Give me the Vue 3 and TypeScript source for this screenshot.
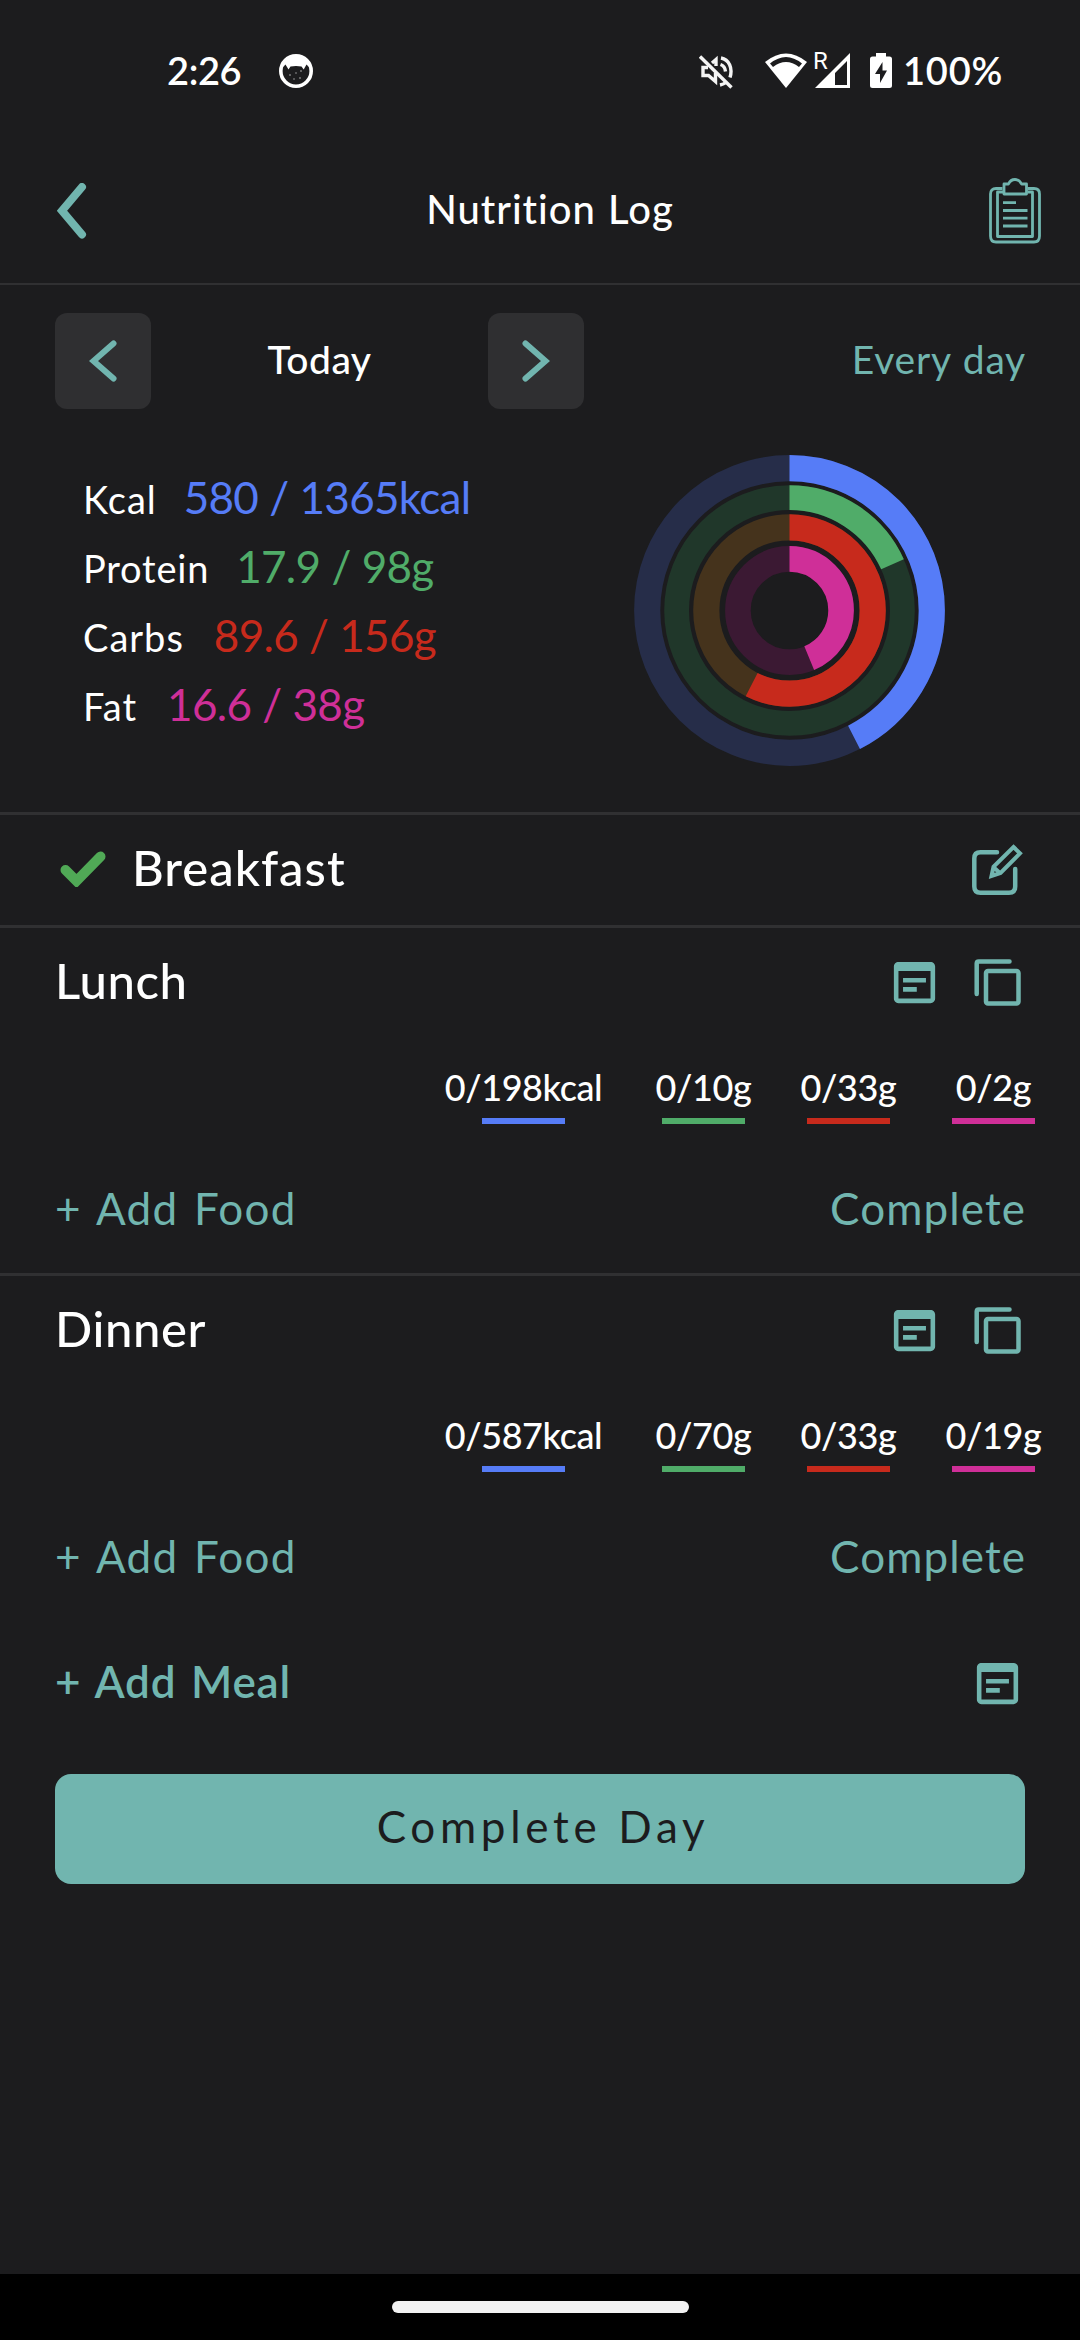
<script setup lang="ts">
interface Macro { label: string; value: string; color: string }
interface Ring { r: number; w: number; frac: number; color: string; track: string }
interface Meal { name: string; done: boolean; totals: { text: string; color: string }[] }

const blue = '#567cf7'
const green = '#50ac69'
const red = '#c72a1c'
const pink = '#cf2f98'

const macros: Macro[] = [
  { label: 'Kcal', value: '580 / 1365kcal', color: blue },
  { label: 'Protein', value: '17.9 / 98g', color: green },
  { label: 'Carbs', value: '89.6 / 156g', color: red },
  { label: 'Fat', value: '16.6 / 38g', color: pink },
]

const rings: Ring[] = [
  { r: 142.3, w: 26.2, frac: 580 / 1365, color: blue, track: '#262d49' },
  { r: 112.9, w: 24.8, frac: 17.9 / 98, color: green, track: '#20372a' },
  { r: 83.2, w: 26.2, frac: 89.6 / 156, color: red, track: '#45331c' },
  { r: 51.6, w: 25.6, frac: 16.6 / 38, color: pink, track: '#3b1933' },
]

const dash = (ring: Ring): string => {
  const c = 2 * Math.PI * ring.r
  return `${c * ring.frac} ${c}`
}

const totals = (a: string, b: string, c: string, d: string) => [
  { text: a, color: blue },
  { text: b, color: green },
  { text: c, color: red },
  { text: d, color: pink },
]

const meals: Meal[] = [
  { name: 'Breakfast', done: true, totals: [] },
  { name: 'Lunch', done: false, totals: totals('0/198kcal', '0/10g', '0/33g', '0/2g') },
  { name: 'Dinner', done: false, totals: totals('0/587kcal', '0/70g', '0/33g', '0/19g') },
]
</script>

<template>
  <div class="screen">
    <div class="status">
      <span class="clock">2:26</span>
      <svg class="cat" viewBox="0 0 34 34">
        <circle cx="17" cy="17" r="15.2" fill="none" stroke="#fff" stroke-width="3.6" />
        <path d="M3 14Q5 2 17 2T31 14L27.500 10.500L24.700 15.500L22.500 12.500Q17 11.500 11.500 12.500L9.500 15.500L6.500 10.500Z" fill="#fff" />
        <g fill="#bbb"><circle cx="11" cy="21" r=".8" /><circle cx="17" cy="19" r=".7" /><circle cx="22" cy="17" r=".8" /><circle cx="15" cy="25" r=".7" /><circle cx="21" cy="24" r=".8" /></g>
      </svg>
      <svg class="mute" viewBox="0 0 34 34" fill="none" stroke="#f4f4f4" stroke-width="3.400">
        <path d="M9 12.500H4V20.500H9.500L16.500 26.500V18M13 8L17 4.500V11" />
        <path d="M22 3C30 4.500 34 13 31 22.500M21.500 9.500Q26 11 26.500 16.500M21 30Q25 29 27 27.500" />
        <path d="M1 1.500L32.500 32.500" />
      </svg>
      <svg class="wifi" viewBox="0 0 42 35">
        <path d="M0 9Q21-8 42 9L21 35Z" fill="#fff" />
        <path d="M5 10.500Q21-2.500 37 10.500L34 14Q21 4 8 14Z" fill="#1c1c1e" />
      </svg>
      <div class="cell">
        <svg viewBox="0 0 35 35"><path d="M35 0V35H0ZM32 8L20 20V32H32Z" fill="#fff" fill-rule="evenodd" /></svg>
        <span class="roam">R</span>
      </div>
      <svg class="battery" viewBox="0 0 22 35">
        <path d="M6 0H16V3.500H19.500Q22 3.500 22 6V32.500Q22 35 19.500 35H2.500Q0 35 0 32.500V6Q0 3.500 2.500 3.500H6Z" fill="#fff" />
        <path d="M12.500 9L5 21H10V30L17 17.500H12.500Z" fill="#1c1c1e" />
      </svg>
      <span class="pct">100%</span>
    </div>

    <header class="header">
      <svg class="back" viewBox="0 0 30 56"><path d="M25 4L5 27.800L25 51.500" /></svg>
      <h1>Nutrition Log</h1>
      <svg class="clipboard" viewBox="0 0 52 66">
        <path d="M13.500 10.500H7Q1.500 10.500 1.500 16V58Q1.500 64 7 64H45Q50.500 64 50.500 58V16Q50.500 10.500 45 10.500H38.500" />
        <path d="M14 14H8.500V58.500H43.500V14H38.500" />
        <path d="M15 6H19.500Q21.500 1.500 26 1.500T32.500 6H37.500V16H15Z" />
        <path d="M14 24.700H27M14 32.500H38.500M14 40.200H38.500M14 48H38.500" />
      </svg>
    </header>

    <div class="day">
      <button class="step"><svg viewBox="0 0 28 42"><path d="M24.500 3.500L4.500 21L24.500 38.500" /></svg></button>
      <span class="today">Today</span>
      <button class="step"><svg viewBox="0 0 28 42"><path d="M3.500 3.500L23.500 21L3.500 38.500" /></svg></button>
      <span class="every">Every day</span>
    </div>

    <section class="summary">
      <div class="macros">
        <div v-for="m in macros" :key="m.label" :class="['macro', m.label.toLowerCase()]">
          <span class="label">{{ m.label }}</span><span class="value" :style="{ color: m.color }">{{ m.value }}</span>
        </div>
      </div>
      <svg class="rings" viewBox="-155.500 -155.500 311 311">
        <g v-for="ring in rings" :key="ring.r" fill="none" :stroke-width="ring.w" transform="rotate(-90)">
          <circle :r="ring.r" :stroke="ring.track" />
          <circle :r="ring.r" :stroke="ring.color" :stroke-dasharray="dash(ring)" />
        </g>
      </svg>
    </section>

    <section v-for="meal in meals" :key="meal.name" class="meal">
      <div class="mealhead">
        <svg v-if="meal.done" class="check" viewBox="0 0 46 36"><path d="M5.500 19L16.500 30L40.500 5.500" /></svg>
        <h2 :class="{ done: meal.done }">{{ meal.name }}</h2>
        <svg v-if="meal.done" class="icon line" viewBox="0 0 55 55">
          <path d="M27 10.300H10.500Q4.300 10.300 4.300 16.500V44.500Q4.300 50.700 10.500 50.700H39Q45.200 50.700 45.200 44.500V27" stroke-linecap="round" />
          <path d="M43.500 5L50 11.300L30.500 31L21.500 34L23.500 24.800ZM23.800 25.500L30.500 31.500" stroke-width="4" />
        </svg>
        <template v-else>
          <svg class="icon fill" viewBox="0 0 24 24"><path d="M19 3H5c-1.110 0-2 .9-2 2v14c0 1.100.89 2 2 2h14c1.100 0 2-.9 2-2V5c0-1.100-.89-2-2-2zm0 16H5V7h14v12zm-2-7H7v-2h10v2zm-4 4H7v-2h6v2z" /></svg>
          <svg class="icon line" viewBox="0 0 55 55">
            <path d="M6.700 39V8.500Q6.700 6.500 8.700 6.500H39.500" stroke-linecap="round" />
            <rect x="16" y="16" width="32.500" height="32.500" rx="2" />
          </svg>
        </template>
      </div>
      <template v-if="!meal.done">
        <div class="totals">
          <div v-for="t in meal.totals" :key="t.color" class="total">
            <span>{{ t.text }}</span>
            <i :style="{ background: t.color }"></i>
          </div>
        </div>
        <div class="actions"><span>+ Add Food</span><span class="complete">Complete</span></div>
      </template>
    </section>

    <div class="addmeal">
      <span>+ Add Meal</span>
      <svg class="icon fill" viewBox="0 0 24 24"><path d="M19 3H5c-1.110 0-2 .9-2 2v14c0 1.100.89 2 2 2h14c1.100 0 2-.9 2-2V5c0-1.100-.89-2-2-2zm0 16H5V7h14v12zm-2-7H7v-2h10v2zm-4 4H7v-2h6v2z" /></svg>
    </div>
    <button class="finish">Complete Day</button>

    <div class="navbar"><div class="pill"></div></div>
  </div>
</template>

<style>
body { background: #1c1c1e; }
</style>

<style scoped>
.screen {
  width: 1080px;
  height: 2340px;
  display: flex;
  flex-direction: column;
  background: #1c1c1e;
  color: #fff;
  font-family: Lato, "Liberation Sans", sans-serif;
  overflow: hidden;
}
.screen > * { flex-shrink: 0; }
svg { display: block; flex-shrink: 0; }
h1, h2 { margin: 0; font-weight: 400; }
button { border: 0; padding: 0; font: inherit; }

.status {
  height: 132px;
  box-sizing: border-box;
  padding: 53px 0 0 167px;
  display: flex;
  align-items: flex-start;
  white-space: nowrap;
}
.clock, .pct {
  font-size: 38px;
  line-height: 35px;
  font-weight: 600;
}
.clock { width: 112px; letter-spacing: -0.4px; }
.cat { width: 34px; height: 34px; margin-top: 1px; }
.mute { width: 34px; height: 34px; margin: 2px 0 0 386px; }
.wifi { width: 42px; height: 35px; margin-left: 32px; }
.cell { position: relative; width: 35px; height: 35px; margin-left: 8px; }
.roam {
  position: absolute;
  left: -2px;
  top: -2px;
  font: 24px/20px Roboto, sans-serif;
}
.battery { width: 22px; height: 35px; margin-left: 20px; }
.pct { margin-left: 11px; letter-spacing: 0.8px; }

.header {
  height: 151px;
  display: flex;
  align-items: center;
  justify-content: space-between;
  padding: 0 39px 0 57px;
  border-bottom: 2px solid #303032;
}
.header h1 {
  font-size: 40px;
  line-height: 50px;
  font-weight: 500;
  letter-spacing: 1px;
  word-spacing: 1px;
  padding: 2px 0 0 24px;
}
.back { width: 30px; height: 56px; margin-top: 6px; }
.back path, .step path {
  fill: none;
  stroke: #71b5af;
  stroke-width: 8;
  stroke-linecap: round;
}
.clipboard { width: 52px; height: 66px; margin-top: 6px; }
.clipboard path { fill: none; stroke: #71b5af; stroke-width: 2.800; stroke-linejoin: round; }

.day {
  display: flex;
  align-items: center;
  padding: 28px 55px 0;
  font-size: 39px;
  line-height: 50px;
}
.step {
  width: 96px;
  height: 96px;
  border-radius: 12px;
  background: #2f2f31;
  display: flex;
  align-items: center;
  justify-content: center;
}
.step svg { width: 28px; height: 42px; }
.step path { stroke-width: 6; }
.today {
  width: 337px;
  text-align: center;
  padding-bottom: 4px;
  font-weight: 500;
  letter-spacing: 0.5px;
}
.every {
  margin: 0 -1px 0 auto;
  padding-bottom: 4px;
  color: #71b5af;
  letter-spacing: 0.8px;
  word-spacing: 1px;
}

.summary {
  height: 403px;
  display: flex;
  justify-content: space-between;
  box-sizing: border-box;
  padding: 46px 135px 0 83px;
}
.macros { padding-top: 8px; }
.macro {
  height: 69px;
  font-size: 44px;
  line-height: 69px;
  white-space: nowrap;
}
.label { font-size: 38px; margin-right: 30px; letter-spacing: 1px; }
.value { letter-spacing: -0.7px; word-spacing: 0.5px; }
.kcal .label { margin-right: 27px; }
.protein .label { margin-right: 27px; letter-spacing: 0.8px; }
.rings { width: 311px; height: 311px; }

.meal { border-top: 3px solid #303032; }
.mealhead {
  height: 108px;
  display: flex;
  align-items: center;
  padding: 0 55px 2px;
}
.mealhead h2 {
  font-size: 49px;
  line-height: 60px;
  font-weight: 500;
  letter-spacing: 0.6px;
  padding-bottom: 5px;
  margin-right: auto;
}
.mealhead h2.done { letter-spacing: 1px; }
.check { width: 46px; height: 36px; margin: 0 26px 0 5px; }
.check path {
  fill: none;
  stroke: #50a956;
  stroke-width: 10;
  stroke-linecap: round;
}
.icon { width: 55px; height: 55px; }
.icon + .icon { margin-left: 28px; }
.fill { fill: #71b5af; }
.line { fill: none; stroke: #71b5af; stroke-width: 4.500; }

.totals {
  display: grid;
  grid-template-columns: 215px 145px 145px 145px;
  justify-content: end;
  padding: 24px 14px 0 0;
  height: 62px;
}
.total {
  display: flex;
  flex-direction: column;
  align-items: center;
  font-size: 36px;
  font-weight: 500;
  letter-spacing: -0.4px;
  line-height: 50px;
}
.total i { width: 83px; height: 6px; margin-top: 6px; }
.actions {
  height: 130px;
  padding: 19px 55px 0;
  display: flex;
  align-items: center;
  justify-content: space-between;
  color: #71b5af;
  font-size: 44px;
  letter-spacing: 1.3px;
  word-spacing: 3px;
}
.complete { margin-right: -1px; letter-spacing: 1.1px; }
.addmeal {
  height: 125px;
  padding: 0 55px;
  display: flex;
  align-items: center;
  justify-content: space-between;
  color: #71b5af;
  font-size: 44px;
  font-weight: 600;
  letter-spacing: 0.8px;
  word-spacing: 3px;
}
.addmeal span { padding-bottom: 6px; }
.finish {
  height: 110px;
  margin: 28px 55px 0;
  padding: 0 0 6px 6px;
  border-radius: 16px;
  background: #71b5af;
  color: #1c1c1e;
  font-size: 44px;
  letter-spacing: 4.7px;
  word-spacing: 1px;
}
.navbar {
  height: 66px;
  margin-top: auto;
  background: #000;
  display: flex;
  align-items: center;
  justify-content: center;
}
.pill { width: 297px; height: 12px; border-radius: 6px; background: #f2f2f2; }
</style>
